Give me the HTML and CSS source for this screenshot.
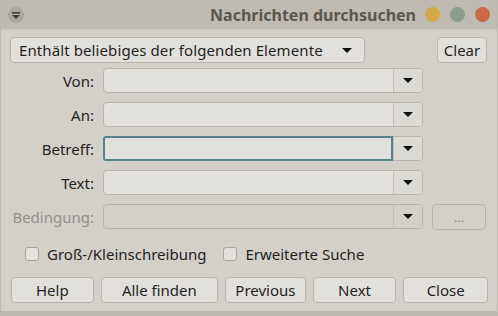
FILE: index.html
```html
<!DOCTYPE html>
<html>
<head>
  <title>Nachrichten durchsuchen</title>
  <link rel="stylesheet" href="styles.css">
</head>
<body>

<div class="window">
  <div class="titlebar">
    <span class="menu-btn">
      <svg width="14" height="14" viewBox="0 0 14 14"><rect x="3" y="4" width="8" height="1.5" fill="#3c3a36"/><path d="M3 7 L11 7 L7 11 Z" fill="#3c3a36"/></svg>
    </span>
    <span class="title">Nachrichten durchsuchen</span>
    <span class="dot dot-min"></span>
    <span class="dot dot-max"></span>
    <span class="dot dot-close"></span>
  </div>

  <div class="content">
    <div class="top-row">
      <div class="select-btn">
        <span>Enthält beliebiges der folgenden Elemente</span>
        <span class="arrow"></span>
      </div>
      <button class="btn clear-btn">Clear</button>
    </div>

    <div class="field-row">
      <label class="field-label">Von:</label>
      <div class="combo"><input type="text"><span class="combo-btn"><span class="arrow"></span></span></div>
    </div>
    <div class="field-row">
      <label class="field-label">An:</label>
      <div class="combo"><input type="text"><span class="combo-btn"><span class="arrow"></span></span></div>
    </div>
    <div class="field-row">
      <label class="field-label">Betreff:</label>
      <div class="combo focused"><input type="text"><span class="combo-btn"><span class="arrow"></span></span></div>
    </div>
    <div class="field-row">
      <label class="field-label">Text:</label>
      <div class="combo"><input type="text"><span class="combo-btn"><span class="arrow"></span></span></div>
    </div>
    <div class="field-row disabled">
      <label class="field-label">Bedingung:</label>
      <div class="combo"><input type="text" disabled><span class="combo-btn"><span class="arrow"></span></span></div>
      <button class="btn more-btn" disabled>...</button>
    </div>

    <div class="check-row">
      <label class="check"><span class="box"></span>Groß-/Kleinschreibung</label>
      <label class="check"><span class="box"></span>Erweiterte Suche</label>
    </div>

    <div class="button-row">
      <button class="btn b-help">Help</button>
      <button class="btn b-all">Alle finden</button>
      <button class="btn b-prev">Previous</button>
      <button class="btn b-next">Next</button>
      <button class="btn b-close">Close</button>
    </div>
  </div>
</div>

</body>
</html>
```

FILE: styles.css
```css
html, body {
  margin: 0;
  padding: 0;
}
body {
  background: #bdb9b1;
  width: 498px;
  height: 316px;
  overflow: hidden;
  font-family: "Noto Sans", sans-serif;
  font-size: 15px;
  color: #1f1f1f;
}
.window {
  width: 496px;
  height: 311px;
  margin-left: 1px;
  background: #d3d0ca;
  border-top-right-radius: 6px;
  border-top-left-radius: 6px;
  overflow: hidden;
}
.titlebar {
  height: 30px;
  background: #bfbab2;
  border-bottom: 1px solid #c9c5be;
  display: flex;
  align-items: center;
  padding: 0 7px 0 7px;
  box-sizing: border-box;
}
.menu-btn {
  width: 16px;
  height: 16px;
  border-radius: 50%;
  background: #aba69e;
  display: flex;
  align-items: center;
  justify-content: center;
}
.title {
  flex: 1;
  text-align: right;
  font-weight: bold;
  font-size: 16px;
  color: #5a5650;
  padding-right: 0;
}
.dot {
  width: 15px;
  height: 15px;
  border-radius: 50%;
  margin-left: 10px;
}
.dot-min { background: #d6a849; margin-left: 9px; }
.dot-max { background: #8d9c90; }
.dot-close { background: #c86a48; }

.content {
  padding: 7px 9px 0 9px;
}
.top-row {
  display: flex;
  justify-content: space-between;
  height: 26px;
  margin-bottom: 5px;
}
.select-btn {
  width: 355px;
  box-sizing: border-box;
  height: 26px;
  border: 1px solid #b9b5ad;
  border-radius: 4px;
  background: #e2e0dc;
  display: flex;
  align-items: center;
  justify-content: space-between;
  padding: 0 12px 0 8px;
  letter-spacing: 0.1px;
}
.arrow {
  width: 0;
  height: 0;
  border-left: 5px solid transparent;
  border-right: 5px solid transparent;
  border-top: 5px solid #111;
}
.btn {
  font-family: "Noto Sans", sans-serif;
  font-size: 15px;
  color: #1f1f1f;
  height: 26px;
  border: 1px solid #b9b5ad;
  border-radius: 4px;
  background: #e2e0dc;
  padding: 0;
  margin: 0;
}
.clear-btn {
  width: 50px;
  margin-right: 1px;
}
.field-row {
  display: flex;
  align-items: center;
  height: 25px;
  margin-bottom: 9px;
}
.field-label {
  width: 84px;
  text-align: right;
  margin-right: 9px;
}
.combo {
  display: flex;
  width: 320px;
  height: 25px;
  box-sizing: border-box;
  border: 1px solid #b9b5ad;
  border-radius: 4px;
  background: #e3e1dd;
}
.combo input {
  flex: 1;
  min-width: 0;
  border: none;
  background: transparent;
  margin: 0;
  padding: 0;
  outline: none;
}
.combo.focused input {
  border: 2px solid #5b818b;
  border-radius: 3px 0 0 3px;
  margin: -1px 0 -1px -1px;
}
.combo-btn {
  width: 28px;
  border-left: 1px solid #c2beb7;
  background: #dcdad5;
  border-radius: 0 3px 3px 0;
  display: flex;
  align-items: center;
  justify-content: center;
}
.disabled .field-label {
  color: #93918d;
}
.disabled .combo {
  background: #d3d0ca;
}
.disabled .combo-btn {
  background: #d3d0ca;
}
.more-btn {
  width: 54px;
  margin-left: 9px;
  background: #d3d0ca;
  color: #93918d;
  font-size: 13px;
}
.check-row {
  display: flex;
  gap: 17px;
  margin-top: 13px;
  padding-left: 15px;
  height: 24px;
  align-items: center;
}
.check {
  display: flex;
  align-items: center;
}
.box {
  width: 12px;
  height: 12px;
  border: 1px solid #aaa69e;
  border-radius: 3px;
  background: #e3e1dd;
  margin-right: 8px;
}
.button-row {
  display: flex;
  gap: 7px;
  margin-top: 11px;
  padding-left: 1px;
}
.b-help { width: 83px; }
.b-all { width: 118px; }
.b-prev { width: 81px; }
.b-next { width: 84px; }
.b-close { width: 85px; }
```
